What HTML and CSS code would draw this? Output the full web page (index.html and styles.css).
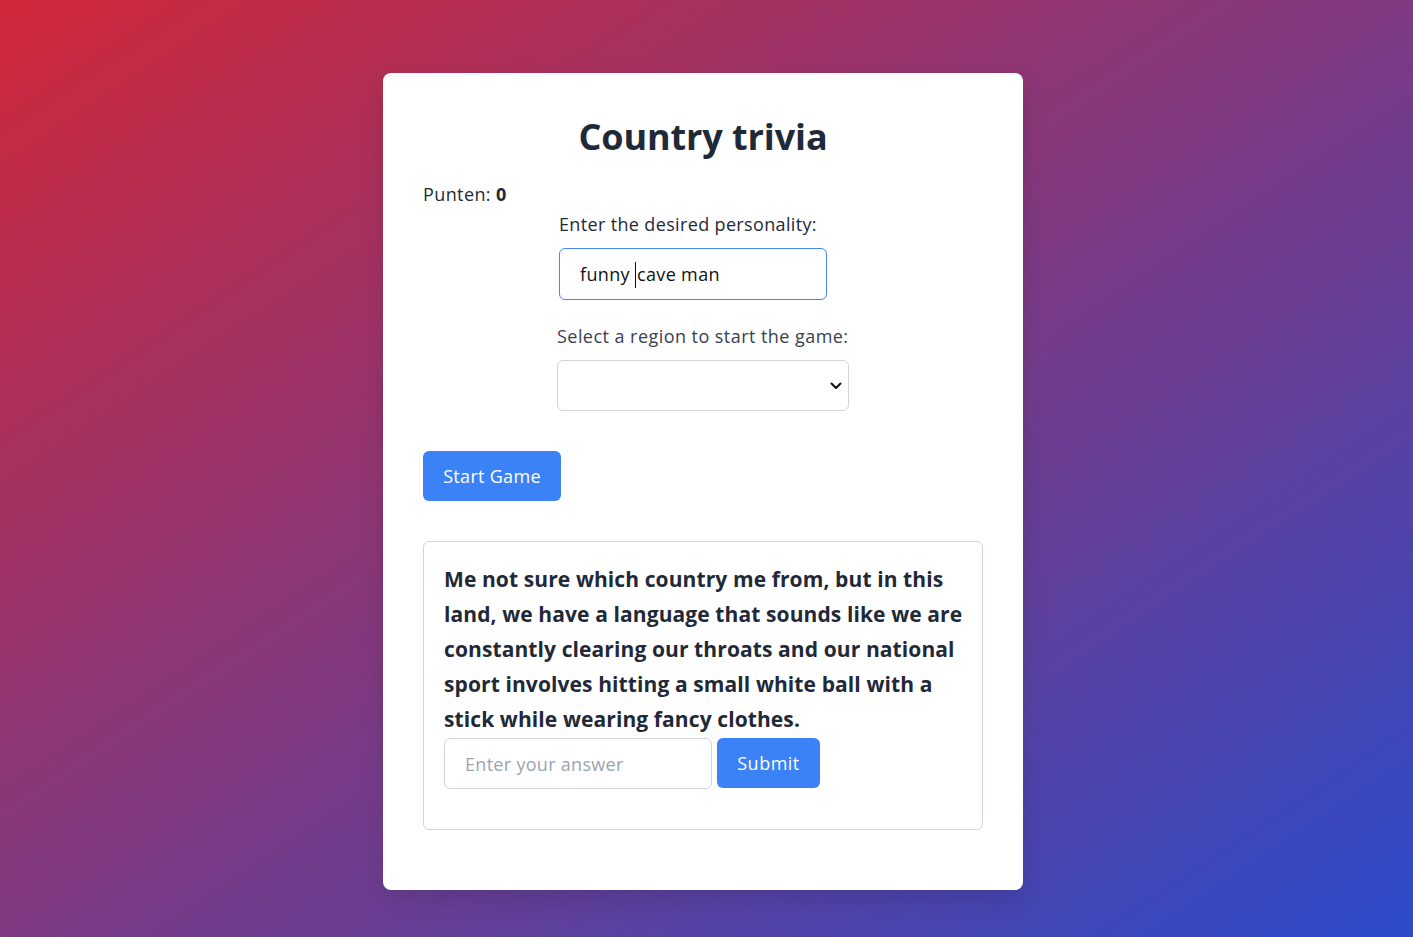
FILE: index.html
```html
<!DOCTYPE html>
<html lang="en">
<head>
<meta charset="utf-8">
<title>Country trivia</title>
<link rel="stylesheet" href="styles.css">
</head>
<body>
<main class="card">
  <h1 class="title">Country trivia</h1>
  <p class="score">Punten: <strong>0</strong></p>
  <div class="setup">
    <div class="field field-personality">
      <label class="label" for="personality">Enter the desired personality:</label>
      <div class="input input-focus" id="personality"><span class="input-text">funny <span class="caret"></span>cave man</span></div>
    </div>
    <div class="field field-region">
      <label class="label label-muted" for="region">Select a region to start the game:</label>
      <div class="select" id="region">
        <svg class="chevron" width="12" height="8" viewBox="0 0 12 8"><path d="M1.5 1.5 L6 6 L10.5 1.5" fill="none" stroke="#111" stroke-width="2" stroke-linecap="round" stroke-linejoin="round"/></svg>
      </div>
    </div>
  </div>
  <button class="btn btn-start">Start Game</button>
  <section class="question">
    <p class="question-text">Me not sure which country me from, but in this land, we have a language that sounds like we are constantly clearing our throats and our national sport involves hitting a small white ball with a stick while wearing fancy clothes.</p>
    <div class="answer-row">
      <input class="input answer" type="text" placeholder="Enter your answer">
      <button class="btn btn-submit">Submit</button>
    </div>
  </section>
</main>
</body>
</html>
```

FILE: styles.css
```css
* { box-sizing: border-box; }
html, body { margin: 0; padding: 0; }
body {
  min-height: 937px;
  background: linear-gradient(to bottom right, #d1283a, #2b4bca);
  font-family: "Open Sans", "Noto Sans", sans-serif;
  color: #1f2937;
  padding: 73px 7px 0 0;
  letter-spacing: 0.35px;
}
.card {
  width: 640px;
  margin: 0 auto;
  background: #fff;
  border-radius: 8px;
  padding: 40px 40px 60px;
  box-shadow: 0 10px 25px rgba(0,0,0,0.12);
}
.title {
  margin: 4px 0 23px;
  font-size: 36px;
  line-height: 40px;
  font-weight: 700;
  text-align: center;
  color: #1f2937;
  letter-spacing: -0.1px;
}
.score {
  margin: 0;
  font-size: 18px;
  line-height: 28px;
  letter-spacing: 0.4px;
}
.setup {
  display: flex;
  flex-direction: column;
  align-items: center;
  margin-top: 2px;
}
.field { display: flex; flex-direction: column; width: 292px; }
.field-personality { padding-left: 2px; }
.field-region { margin-top: 22px; }
.label {
  font-size: 18px;
  line-height: 28px;
  color: #1f2937;
  white-space: nowrap;
}
.label-muted { color: #374151; letter-spacing: 0.45px; }
.input {
  margin-top: 10px;
  width: 268px;
  height: 52px;
  border: 1px solid #d1d5db;
  border-radius: 6px;
  padding: 0 20px;
  font-family: inherit;
  font-size: 18px;
  letter-spacing: 0.35px;
  color: #111;
  background: #fff;
  line-height: 50px;
}
.input-focus { border-color: #4a86f0; }
.input-text { white-space: pre; }
.caret {
  display: inline-block;
  width: 1px;
  height: 26px;
  background: #111;
  vertical-align: -7px;
  margin-right: 1px;
}
.select {
  margin-top: 10px;
  width: 292px;
  height: 51px;
  border: 1px solid #d1d5db;
  border-radius: 6px;
  display: flex;
  align-items: center;
  justify-content: flex-end;
  padding-right: 6px;
}
.btn {
  border: none;
  background: #3b82f6;
  color: #fff;
  font-family: inherit;
  font-size: 18px;
  border-radius: 6px;
  cursor: pointer;
  letter-spacing: 0.3px;
}
.btn-start {
  margin-top: 40px;
  width: 138px;
  height: 50px;
  display: block;
}
.question {
  margin-top: 40px;
  border: 1px solid #d1d5db;
  border-radius: 6px;
  padding: 20px 16px 40px 20px;
}
.question-text {
  margin: 0;
  font-size: 21px;
  line-height: 35px;
  font-weight: 700;
  color: #1f2937;
  letter-spacing: 0.1px;
}
.answer-row {
  margin-top: 1px;
  display: flex;
  gap: 5px;
}
.answer {
  margin-top: 0;
  height: 51px;
  line-height: normal;
  outline: none;
  letter-spacing: 0.3px;
}
.answer::placeholder { color: #9ca3af; }
.btn-submit {
  width: 103px;
  height: 50px;
  letter-spacing: 0.5px;
}
```
